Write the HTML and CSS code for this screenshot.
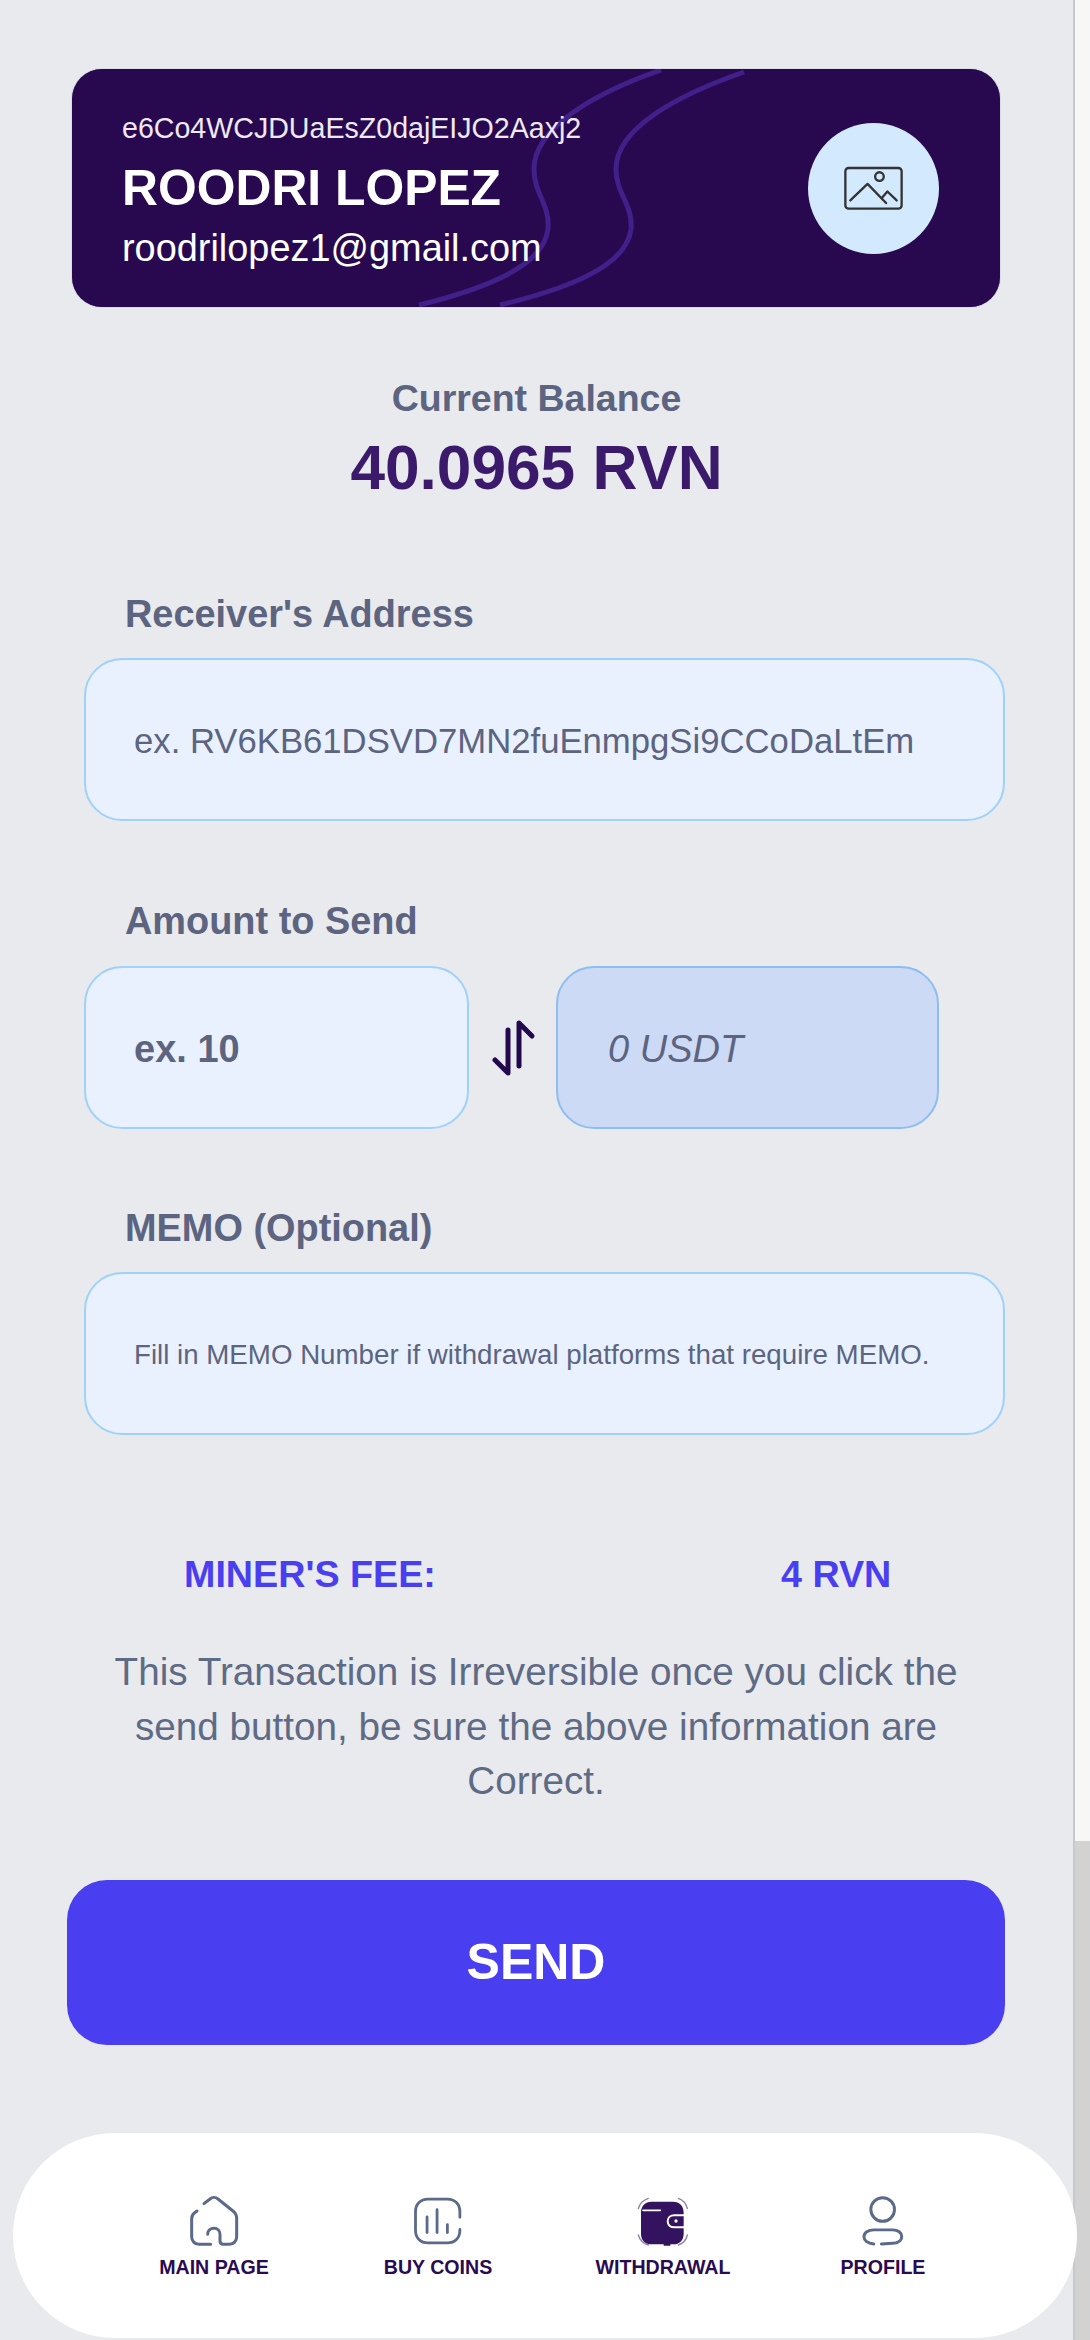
FILE: index.html
```html
<!DOCTYPE html>
<html lang="en">
<head>
    <meta charset="UTF-8">
    <meta name="viewport" content="width=device-width, initial-scale=1.0">
    <title>Withdrawal</title>
    <link rel="stylesheet" href="styles.css">
</head>
<body>
    <div class="screen">
        <main class="content">
            <section class="user-card">
                <svg class="card-waves" viewBox="0 0 928 238" fill="none">
                    <path d="M589 1C520 25 462 60 462 100C462 125 478 135 476 160C472 195 420 218 347 236"/>
                    <path d="M672 3C603 27 544 60 544 100C544 125 561 135 559 160C555 195 503 218 428 236"/>
                </svg>
                <div class="user-info">
                    <div class="user-id">e6Co4WCJDUaEsZ0dajEIJO2Aaxj2</div>
                    <div class="user-name">ROODRI LOPEZ</div>
                    <div class="user-email">roodrilopez1@gmail.com</div>
                </div>
                <div class="avatar">
                    <svg width="63" height="48" viewBox="185 190 190 145" fill="none" stroke="#333" stroke-width="7" stroke-linecap="round" stroke-linejoin="round">
                        <rect x="195" y="202" width="170" height="123" rx="10"/>
                        <circle cx="298" cy="228" r="13"/>
                        <path d="M210 300L262 250L318 308"/>
                        <path d="M305 293L322 273L350 300"/>
                    </svg>
                </div>
            </section>

            <div class="balance-label">Current Balance</div>
            <div class="balance-value">40.0965 RVN</div>

            <div class="label label-first">Receiver's Address</div>
            <div class="field field-wide">ex. RV6KB61DSVD7MN2fuEnmpgSi9CCoDaLtEm</div>

            <div class="label label-amount">Amount to Send</div>
            <div class="amount-row">
                <div class="field field-half field-bold">ex. 10</div>
                <svg class="swap-icon" width="48" height="60" viewBox="490 1012 48 60" fill="none" stroke="#24084e" stroke-width="5" stroke-linecap="round" stroke-linejoin="round">
                    <path d="M508 1024V1067L495 1054"/>
                    <path d="M519 1060V1017L532 1030"/>
                </svg>
                <div class="field field-half field-usdt">0 USDT</div>
            </div>

            <div class="label label-memo">MEMO (Optional)</div>
            <div class="field field-wide field-small">Fill in MEMO Number if withdrawal platforms that require MEMO.</div>

            <div class="fee-row">
                <span>MINER'S FEE:</span>
                <span>4 RVN</span>
            </div>

            <p class="notice">This Transaction is Irreversible once you click the send button, be sure the above information are Correct.</p>

            <button class="send-button">SEND</button>

            <nav class="bottom-nav">
                <a class="nav-item">
                    <svg width="50" height="52" viewBox="90 70 150 156" fill="none" stroke="#5c6a8a" stroke-width="9" stroke-linecap="round" stroke-linejoin="round">
                        <path d="M135 96L153 82C160 76 170 76 177 82L222 118C230 124 233 130 233 140V195C233 208 224 218 211 218H193C187 218 183 214 183 208V188C183 177 176 170 165 170C154 170 146 177 146 188"/>
                        <path d="M114 118L106 124C100 129 98 134 98 142V195C98 208 107 218 120 218H155"/>
                    </svg>
                    <span>MAIN PAGE</span>
                </a>
                <a class="nav-item">
                    <svg width="50" height="52" viewBox="755 70 160 156" fill="none" stroke="#5c6a8a" stroke-width="9" stroke-linecap="round" stroke-linejoin="round">
                        <path d="M905 136V118C905 94 889 78 865 78H803C779 78 763 94 763 118V178C763 202 779 218 803 218H865C889 218 905 202 905 178V175"/>
                        <path d="M800 135V185"/>
                        <path d="M832 112V185"/>
                        <path d="M865 160V185"/>
                    </svg>
                    <span>BUY COINS</span>
                </a>
                <a class="nav-item">
                    <svg width="52" height="52" viewBox="200 72 156 156" fill="none">
                        <path d="M212 125C212 105 224 92 244 92H308C328 92 340 105 340 125V188C340 208 328 220 308 220H300V224H280V220H244C224 220 212 208 212 188Z" fill="#33135f"/>
                        <path d="M218 118H270" stroke="#fff" stroke-width="5" stroke-linecap="round"/>
                        <path d="M342 133H312C300 133 292 140 292 151C292 162 300 169 312 169H342" stroke="#fff" stroke-width="6"/>
                        <circle cx="317" cy="150" r="5" fill="#fff"/>
                        <g stroke="#8d80aa" stroke-width="4" stroke-linecap="round">
                            <path d="M204 113C208 98 218 87 234 82"/>
                            <path d="M324 82C338 87 348 98 351 113"/>
                            <path d="M204 192C208 207 218 217 234 222"/>
                            <path d="M324 222C338 217 348 207 351 192"/>
                        </g>
                    </svg>
                    <span>WITHDRAWAL</span>
                </a>
                <a class="nav-item">
                    <svg width="44" height="52" viewBox="866 70 134 156" fill="none" stroke="#5c6a8a" stroke-width="9" stroke-linecap="round" stroke-linejoin="round">
                        <circle cx="932" cy="113" r="36"/>
                        <path d="M905 218C886 216 875 207 875 196C875 184 888 175 905 175H962C979 175 990 184 990 195C990 207 979 215 962 216L928 218"/>
                    </svg>
                    <span>PROFILE</span>
                </a>
            </nav>
        </main>
        <div class="scrollbar"></div>
    </div>
</body>
</html>
```

FILE: styles.css
```css
html, body {
    margin: 0;
    height: 2340px;
    overflow: hidden;
}

body {
    font-family: "Liberation Sans", Arial, sans-serif;
    background-color: #e8eaee;
}

.screen {
    display: flex;
    height: 2340px;
}

.content {
    flex: 1;
    min-width: 0;
    position: relative;
    z-index: 1;
    padding-top: 69px;
}

.user-card {
    position: relative;
    box-sizing: border-box;
    display: flex;
    align-items: center;
    justify-content: space-between;
    width: 928px;
    height: 238px;
    margin-left: 72px;
    padding: 0 61px 0 50px;
    background-color: #28094f;
    border-radius: 30px;
    box-shadow: 0 0 1px #6b5a8a;
    overflow: hidden;
}

.card-waves {
    position: absolute;
    top: 0;
    left: 0;
    width: 928px;
    height: 238px;
}

.card-waves path {
    stroke: #41208a;
    stroke-width: 5;
}

.user-info {
    position: relative;
    color: #fff;
}

.user-id {
    font-size: 28.6px;
    line-height: 40px;
    color: #eee9f5;
}

.user-name {
    font-size: 49.8px;
    font-weight: bold;
    line-height: 80px;
}

.user-email {
    font-size: 37.9px;
    line-height: 40px;
}

.avatar {
    position: relative;
    display: flex;
    align-items: center;
    justify-content: center;
    width: 131px;
    height: 131px;
    border-radius: 50%;
    background-color: #d3e9fd;
}

.balance-label {
    margin-top: 69px;
    text-align: center;
    font-size: 37.5px;
    font-weight: bold;
    line-height: 44px;
    color: #5c6480;
}

.balance-value {
    margin-top: 13px;
    text-align: center;
    font-size: 62.2px;
    font-weight: bold;
    line-height: 70px;
    color: #3b1a6b;
}

.label {
    margin: 78px 0 22px 125px;
    font-size: 37.9px;
    font-weight: bold;
    line-height: 44px;
    color: #5c6480;
}

.label-first {
    margin-top: 89px;
}

.label-amount {
    margin-bottom: 23px;
}

.label-memo {
    margin-top: 77px;
}

.field {
    box-sizing: border-box;
    display: flex;
    align-items: center;
    height: 163px;
    padding: 3px 48px 0;
    background-color: #e9f1fe;
    border: 2.5px solid #a0d1f9;
    border-radius: 38px;
    font-size: 34.7px;
    color: #5c6480;
}

.field-wide {
    width: 921px;
    margin-left: 84px;
}

.field-small {
    font-size: 27.7px;
}

.amount-row {
    display: flex;
    align-items: center;
    margin-left: 84px;
}

.field-half {
    width: 385px;
    font-size: 38px;
}

.field-bold {
    font-weight: bold;
}

.swap-icon {
    margin: 0 18px 0 21px;
}

.field-usdt {
    width: 383px;
    padding-left: 50px;
    font-style: italic;
    background-color: #ccdaf5;
    border-color: #8dbdf2;
}

.fee-row {
    display: flex;
    margin: 117px 0 0 184px;
    font-size: 37.7px;
    font-weight: bold;
    line-height: 44px;
    color: #4a3ff0;
}

.fee-row span:first-child {
    width: 597px;
}

.notice {
    width: 860px;
    margin: 49px 0 0 106px;
    text-align: center;
    font-size: 38.7px;
    line-height: 54.5px;
    color: #5f6a85;
}

.send-button {
    display: block;
    width: 938px;
    height: 165px;
    margin: 71px 0 0 67px;
    background-color: #4a3ff0;
    border: none;
    border-radius: 40px;
    font-family: inherit;
    font-size: 50px;
    font-weight: bold;
    color: #fff;
}

.bottom-nav {
    box-sizing: border-box;
    display: grid;
    grid-template-columns: 224px 224px 226px 214px;
    height: 205px;
    margin: 88px -4px 0 13px;
    padding: 62px 0 0 89px;
    background-color: #fff;
    border-radius: 102px;
}

.nav-item {
    display: flex;
    flex-direction: column;
    align-items: center;
    font-size: 19.6px;
    font-weight: bold;
    color: #2a0a50;
}

.nav-item span {
    margin-top: 9px;
    line-height: 22px;
}

.scrollbar {
    flex: none;
    box-sizing: border-box;
    width: 17px;
    height: 2340px;
    background: linear-gradient(#f7f7f7 1841px, #d2d2d2 1841px);
    border-left: 2px solid #c8c8ca;
}
```
